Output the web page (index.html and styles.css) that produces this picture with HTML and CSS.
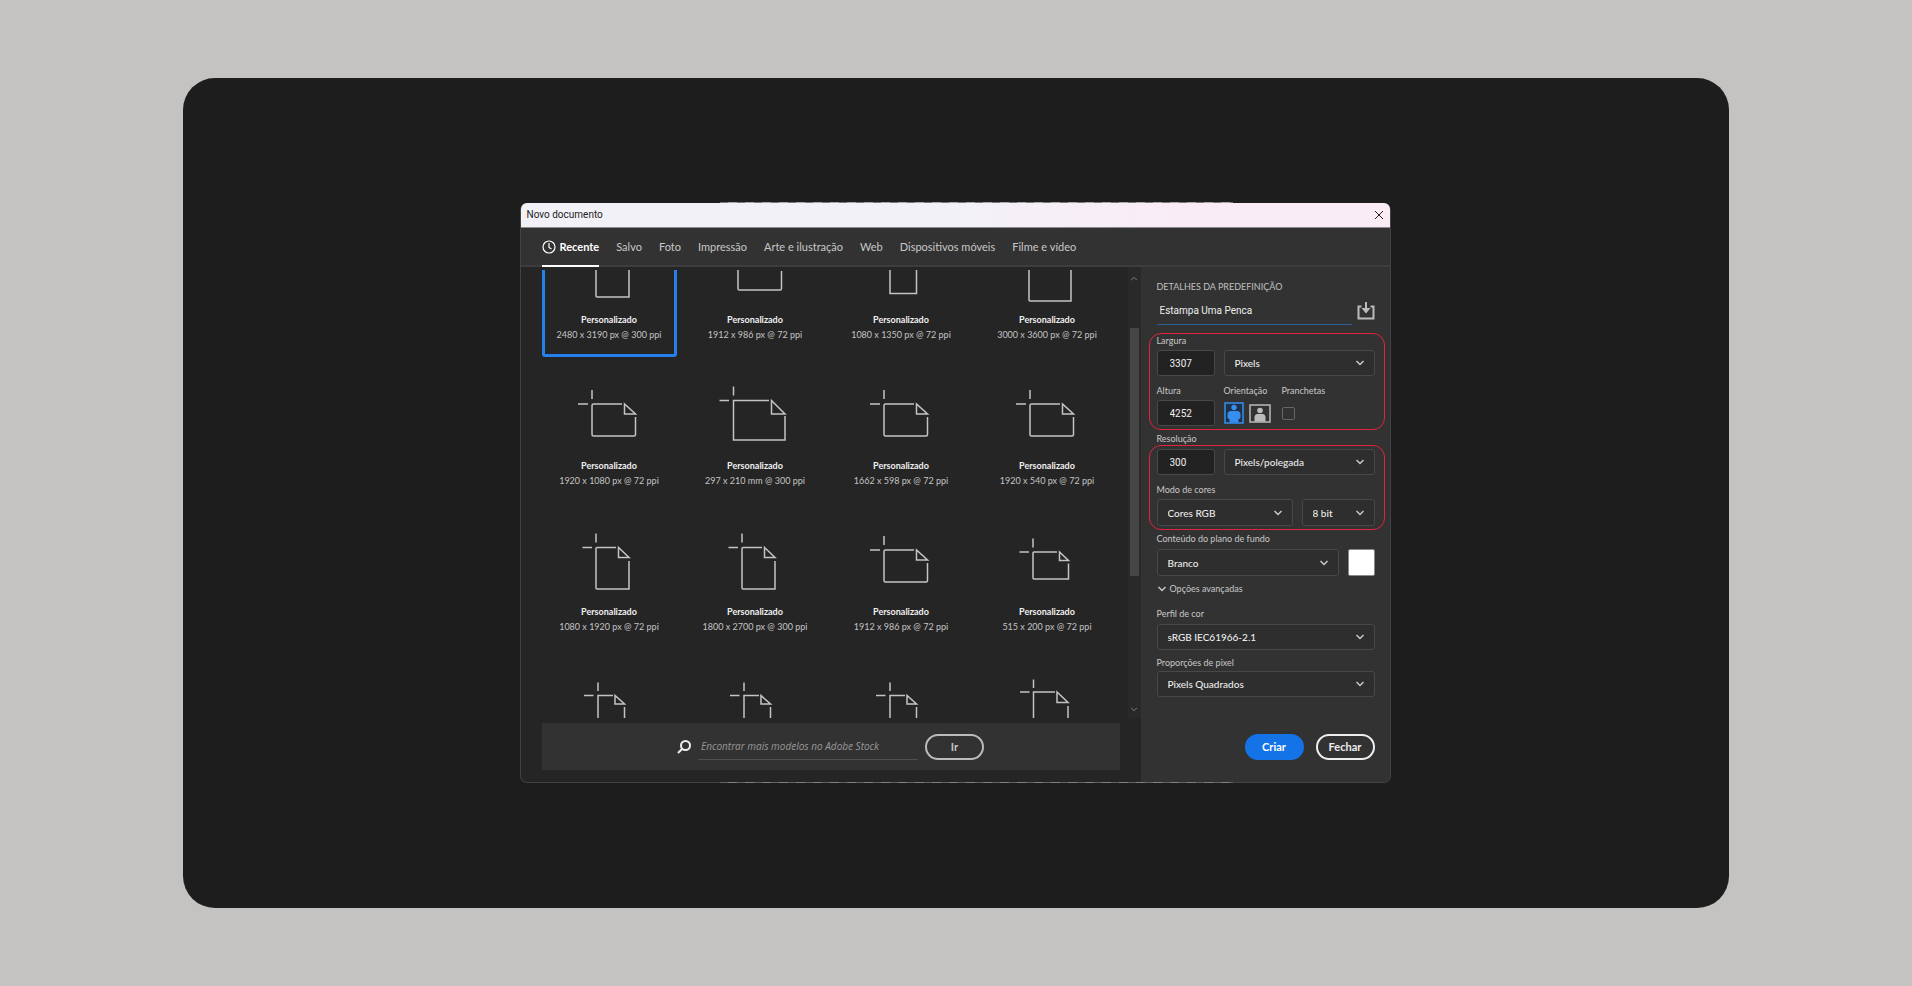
FILE: index.html
```
<!DOCTYPE html>
<html lang="pt-BR">
<head>
<meta charset="utf-8">
<title>Novo documento</title>
<link rel="stylesheet" href="styles.css">
</head>
<body>
<svg class="sprite" aria-hidden="true">
  <symbol id="doc-wide" viewBox="0 0 80 80"><path d="M23 10v9M9 24h10M53 24H24.500q-1.500 0-1.500 1.500V54.500q0 1.500 1.500 1.500h40.500q1.500 0 1.500-1.500V37M55.500 24v10h11z"/></symbol>
  <symbol id="doc-a4" viewBox="0 0 80 80"><path d="M18.500 6.500v9M4.500 20.500h9.500M54 20.500H18.500V60h51.500V36M56.500 20.500v13.500h13.500z"/></symbol>
  <symbol id="doc-tall" viewBox="0 0 80 80"><path d="M27 7.500v9M13.500 21.500h9.500M47 21.500H28q-1 0-1 1V62q0 1 1 1h32V35M49.500 21.500v10h10.500z"/></symbol>
  <symbol id="doc-small" viewBox="0 0 80 80"><path d="M26 12.500v9M12.500 26h9.500M50 26H27q-1 0-1 1V52q0 1 1 1h34.500V37.500M52.500 26v8.500h9z"/></symbol>
  <symbol id="doc-narrow" viewBox="0 0 80 80"><path d="M29 10.500v8.500M15 23.500h9.500M44 23.500H29V59.500h26.500V35M46 23.500v8.500h9.500z"/></symbol>
  <symbol id="doc-large" viewBox="0 0 80 80"><path d="M26.500 7.500v8.500M13 20h9.500M48 20H26.500V60h34.500V34M50 20v10.500h11z"/></symbol>
  <symbol id="doc-big" viewBox="0 0 80 80"><path d="M22 4v9M8 17h9.500M50 17H22V66q0 1 1 1h41V31M52 17v12h12z"/></symbol>
  <symbol id="chevron" viewBox="0 0 10 6"><path d="M1.500 1l3.500 3.500L8.500 1"/></symbol>
</svg>
<main class="stage">
  <section class="dialog" aria-label="Novo documento">
    <header class="titlebar">
      <h1>Novo documento</h1>
      <button class="close" aria-label="Fechar janela"><svg viewBox="0 0 10 10"><path d="M1 1l8 8M9 1L1 9"/></svg></button>
    </header>
    <nav class="tabs">
      <button class="tab active"><svg viewBox="0 0 14 14"><circle cx="7" cy="7" r="6"/><path d="M7 3v4.500l2.500 1.500"/></svg>Recente</button>
      <button class="tab">Salvo</button>
      <button class="tab">Foto</button>
      <button class="tab">Impressão</button>
      <button class="tab">Arte e ilustração</button>
      <button class="tab">Web</button>
      <button class="tab">Dispositivos móveis</button>
      <button class="tab">Filme e vídeo</button>
    </nav>
    <div class="body">
      <div class="browser">
        <div class="list">
          <div class="viewport">
            <div class="grid">
              <button class="card selected"><svg><use href="#doc-tall"/></svg><b>Personalizado</b><span>2480 x 3190 px @ 300 ppi</span></button>
              <button class="card"><svg><use href="#doc-wide"/></svg><b>Personalizado</b><span>1912 x 986 px @ 72 ppi</span></button>
              <button class="card"><svg><use href="#doc-narrow"/></svg><b>Personalizado</b><span>1080 x 1350 px @ 72 ppi</span></button>
              <button class="card"><svg><use href="#doc-big"/></svg><b>Personalizado</b><span>3000 x 3600 px @ 72 ppi</span></button>
              <button class="card"><svg><use href="#doc-wide"/></svg><b>Personalizado</b><span>1920 x 1080 px @ 72 ppi</span></button>
              <button class="card"><svg><use href="#doc-a4"/></svg><b>Personalizado</b><span>297 x 210 mm @ 300 ppi</span></button>
              <button class="card"><svg><use href="#doc-wide"/></svg><b>Personalizado</b><span>1662 x 598 px @ 72 ppi</span></button>
              <button class="card"><svg><use href="#doc-wide"/></svg><b>Personalizado</b><span>1920 x 540 px @ 72 ppi</span></button>
              <button class="card"><svg><use href="#doc-tall"/></svg><b>Personalizado</b><span>1080 x 1920 px @ 72 ppi</span></button>
              <button class="card"><svg><use href="#doc-tall"/></svg><b>Personalizado</b><span>1800 x 2700 px @ 300 ppi</span></button>
              <button class="card"><svg><use href="#doc-wide"/></svg><b>Personalizado</b><span>1912 x 986 px @ 72 ppi</span></button>
              <button class="card"><svg><use href="#doc-small"/></svg><b>Personalizado</b><span>515 x 200 px @ 72 ppi</span></button>
              <button class="card" aria-label="Personalizado"><svg><use href="#doc-narrow"/></svg></button>
              <button class="card" aria-label="Personalizado"><svg><use href="#doc-narrow"/></svg></button>
              <button class="card" aria-label="Personalizado"><svg><use href="#doc-narrow"/></svg></button>
              <button class="card" aria-label="Personalizado"><svg><use href="#doc-large"/></svg></button>
            </div>
          </div>
          <div class="scrollbar">
            <svg class="arrow up"><use href="#chevron"/></svg>
            <div class="track"><div class="thumb"></div></div>
            <svg class="arrow"><use href="#chevron"/></svg>
          </div>
        </div>
        <form class="search">
          <svg viewBox="0 0 14 14"><circle cx="8.500" cy="5.500" r="4.500"/><path d="M5.300 8.700L1 13"/></svg>
          <input type="text" aria-label="Buscar modelos" placeholder="Encontrar mais modelos no Adobe Stock">
          <button type="button" class="pill">Ir</button>
        </form>
      </div>
      <aside class="details">
        <h2>DETALHES DA PREDEFINIÇÃO</h2>
        <div class="name-row">
          <input type="text" aria-label="Nome da predefinição" value="Estampa Uma Penca">
          <button class="save" aria-label="Salvar predefinição"><svg viewBox="0 0 18 18"><path class="tray" d="M4.500 4.500H1.500v12h15v-12h-3"/><path class="stem" d="M9 0v8"/><path class="head" d="M4.500 6h9L9 11.500z"/></svg></button>
        </div>
        <div class="marked size">
          <div class="label-row"><label for="w">Largura</label></div>
          <div class="row">
            <input class="num" id="w" value="3307">
            <div class="select grow"><select aria-label="Unidade"><option>Pixels</option></select><svg><use href="#chevron"/></svg></div>
          </div>
          <div class="label-row second"><label class="w-num" for="h">Altura</label><span class="w-orient">Orientação</span><label for="boards">Pranchetas</label></div>
          <div class="row">
            <input class="num" id="h" value="4252">
            <div class="orient w-orient">
              <button class="portrait" aria-label="Retrato"><svg viewBox="0 0 20 22"><rect x="1" y="1" width="18" height="20"/><circle cx="10" cy="5.500" r="2.700"/><path d="M7 9h6q3.500 0 3.500 3.500V15.500q0 1.500-2 1.500V20.500H5.500V17q-2 0-2-1.500v-3q0-3.500 3.500-3.500z"/></svg></button>
              <button class="landscape" aria-label="Paisagem"><svg viewBox="0 0 22 19"><rect x="1" y="1" width="20" height="17"/><circle cx="11" cy="6.500" r="2.800"/><path d="M5.500 17.500V13.500q0-3.500 3-3.500h5q3 0 3 3.500v4z"/></svg></button>
            </div>
            <input type="checkbox" id="boards">
          </div>
        </div>
        <div class="label-row"><label for="res">Resolução</label></div>
        <div class="marked mode">
          <div class="row">
            <input class="num" id="res" value="300">
            <div class="select grow"><select aria-label="Unidade de resolução"><option>Pixels/polegada</option></select><svg><use href="#chevron"/></svg></div>
          </div>
          <div class="label-row second"><label for="mode">Modo de cores</label></div>
          <div class="row">
            <div class="select tall grow"><select id="mode"><option>Cores RGB</option></select><svg><use href="#chevron"/></svg></div>
            <div class="select tall depth"><select aria-label="Profundidade"><option>8 bit</option></select><svg><use href="#chevron"/></svg></div>
          </div>
        </div>
        <div class="label-row background"><label for="bg">Conteúdo do plano de fundo</label></div>
        <div class="row">
          <div class="select tall grow"><select id="bg"><option>Branco</option></select><svg><use href="#chevron"/></svg></div>
          <button class="swatch" aria-label="Cor de fundo"></button>
        </div>
        <button class="advanced"><svg><use href="#chevron"/></svg>Opções avançadas</button>
        <div class="label-row profile"><label for="profile">Perfil de cor</label></div>
        <div class="row"><div class="select grow"><select id="profile"><option>sRGB IEC61966-2.1</option></select><svg><use href="#chevron"/></svg></div></div>
        <div class="label-row ratio"><label for="ratio">Proporções de pixel</label></div>
        <div class="row"><div class="select grow"><select id="ratio"><option>Pixels Quadrados</option></select><svg><use href="#chevron"/></svg></div></div>
        <div class="actions">
          <button class="pill primary">Criar</button>
          <button class="pill light">Fechar</button>
        </div>
      </aside>
    </div>
  </section>
</main>
</body>
</html>
```
FILE: styles.css
```
* { box-sizing: border-box; }
body {
  margin: 0;
  min-height: 100vh;
  display: flex;
  padding: 78px 183px;
  background: #c4c3c1;
  color: #c8c8c8;
  font: 9px/12px Lato, "Open Sans", sans-serif;
}
button, input, select { font: inherit; color: inherit; margin: 0; padding: 0; border: 0; background: none; }
svg { display: block; flex: none; fill: none; stroke: currentColor; }
.sprite { position: absolute; width: 0; height: 0; }
.stage {
  flex: 1;
  display: flex;
  align-items: center;
  justify-content: center;
  padding-right: 2px;
  border-radius: 32px;
  background: #1d1d1d;
}
.dialog {
  position: relative;
  width: 100%;
  max-width: 871px;
  border: 1px solid #424242;
  border-top: 0;
  border-radius: 7px;
  background: #252525;
}
.dialog::before, .dialog::after {
  content: "";
  position: absolute;
  left: 23%;
  right: 18%;
  height: 1px;
  background: repeating-linear-gradient(90deg, #777 0 8px, #aaa 8px 17px);
}
.dialog::before { top: -1px; }
.dialog::after { bottom: -1px; opacity: .6; }
.titlebar {
  display: flex;
  align-items: center;
  justify-content: space-between;
  height: 25px;
  padding: 0 6px;
  border-bottom: 1px solid #8c8c8c;
  border-radius: 6px 6px 0 0;
  background: linear-gradient(90deg, #f3f1f8 50%, #f9ecf5 75%);
  color: #222;
}
.titlebar h1 { margin: 0; font-size: 10px; font-weight: 400; font-family: Roboto, sans-serif; }
.close svg { width: 10px; height: 10px; }
.tabs {
  display: flex;
  gap: 17px;
  height: 39px;
  padding: 0 21px;
  border-bottom: 2px solid #3d3d3d;
  background: #323232;
  font-size: 11px;
}
.tab { display: flex; align-items: center; gap: 4px; height: 39px; padding-top: 1px; border-bottom: 2px solid transparent; white-space: nowrap; }
.tab.active { border-color: #fff; color: #fff; font-weight: 700; }
.tab svg { width: 14px; height: 14px; stroke-width: 1.2; }
.body { display: flex; align-items: stretch; }
.browser { flex: 1; min-width: 0; }
.list { display: flex; height: 451px; }
.viewport { flex: 1; min-width: 0; margin-top: 3px; padding: 0 13px 0 21px; overflow: hidden; }
.grid { display: grid; grid-template-columns: repeat(4, 1fr); gap: 11px; margin-top: -48px; }
.card {
  display: flex;
  flex-direction: column;
  align-items: center;
  height: 135px;
  padding-top: 9px;
  border: 3px solid transparent;
  border-radius: 3px;
  color: #c4c4c4;
  white-space: nowrap;
}
.card.selected { border-color: #2680eb; }
.card svg { width: 80px; height: 80px; stroke-width: 1.5; }
.card b { color: #f0f0f0; line-height: 12px; }
.card span { margin-top: 3px; }
.scrollbar { display: flex; flex-direction: column; align-items: center; width: 13px; padding: 9px 0 6px; background: #292929; }
.arrow { width: 8px; height: 5px; color: #999; }
.arrow.up { transform: rotate(180deg); }
.track { flex: 1; width: 9px; padding: 47px 0 131px; }
.thumb { height: 100%; background: #464646; }
.search {
  display: flex;
  align-items: center;
  justify-content: center;
  margin: 5px 21px 12px;
  padding: 10px 0;
  height: 47px;
  background: #323232;
}
.search svg { width: 14px; height: 14px; color: #eee; stroke-width: 2; }
.search input { width: 220px; height: 26px; margin: 0 7px; padding: 0 3px; border-bottom: 1px solid #505050; font: italic 10px/12px "Open Sans", sans-serif; }
.search input::placeholder { color: #989898; opacity: 1; }
.pill { width: 59px; height: 26px; border: 2px solid #bbb; border-radius: 13px; font-size: 11px; font-weight: 700; }
.pill.primary { border-color: #1473e6; background: #1473e6; color: #fff; }
.pill.light { border-color: #eee; color: #eee; }
.details { width: 249px; padding: 14px 15px 22px 16px; border-radius: 0 0 6px 0; background: #323232; }
.details h2 { margin: 0; font-size: 9px; font-weight: 400; line-height: 12px; color: #c0c0c0; }
.name-row { display: flex; align-items: center; justify-content: space-between; margin-bottom: 8px; padding-top: 4px; }
.name-row input { flex: 1; min-width: 0; height: 28px; margin-right: 5px; padding: 0 3px; border-bottom: 1px solid #2a6096; color: #eee; font: 10px/14px Roboto, sans-serif; }
.save svg { width: 18px; height: 18px; color: #bbb; }
.save .tray, .save .stem { stroke-width: 2; }
.save .head { fill: currentColor; stroke: none; }
.marked { margin: 0 -10px 0 -8px; padding: 1px 9px 3px 7px; border: 1px solid #e0233f; border-radius: 12px; }
.marked.mode { padding-top: 3px; }
.marked.size { margin-bottom: 3px; }
.label-row { display: flex; height: 12px; gap: 9px; }
.marked .label-row { margin-bottom: 3px; }
.second { margin-top: 9px; }
.w-num { width: 58px; }
.w-orient { width: 49px; }
.row { display: flex; align-items: center; gap: 9px; }
.num { width: 58px; height: 26px; padding: 0 12px; border: 1px solid #484848; border-radius: 3px; background: #222; color: #f0f0f0; font: 10px/12px Roboto, sans-serif; }
.select { display: grid; align-items: center; height: 26px; font-size: 10px; color: #ececec; }
.select.tall { height: 27px; }
.select select { grid-area: 1 / 1; width: 100%; height: 100%; padding: 0 10px; border: 1px solid #484848; border-radius: 3px; background: #2e2e2e; appearance: none; font-weight: 500; }
.select svg { grid-area: 1 / 1; justify-self: end; margin-right: 10px; width: 10px; height: 6px; color: #c8c8c8; stroke-width: 1.5; pointer-events: none; }
.grow { flex: 1; }
.depth { width: 73px; }
.orient { display: flex; align-items: center; gap: 5px; }
.orient rect { stroke-width: 1.5; }
.orient circle, .orient path { fill: currentColor; stroke: none; }
.portrait { color: #378ef0; }
.portrait rect { fill: #1d3149; }
.portrait svg { width: 20px; height: 22px; }
.landscape { color: #bbb; }
.landscape svg { width: 22px; height: 19px; }
input[type="checkbox"] { width: 13px; height: 13px; border: 1px solid #666; border-radius: 2px; appearance: none; }
.background { margin: 3px 0 4px; }
.swatch { width: 27px; height: 27px; border: 1px solid #888; border-radius: 2px; background: #fff; }
.advanced { display: flex; align-items: center; gap: 3px; margin-top: 7px; height: 12px; }
.advanced svg { width: 10px; height: 6px; stroke-width: 1.5; }
.profile { margin: 13px 0 4px; }
.ratio { margin: 7px 0 2px; }
.actions { display: flex; justify-content: flex-end; gap: 12px; margin-top: 37px; }
```
